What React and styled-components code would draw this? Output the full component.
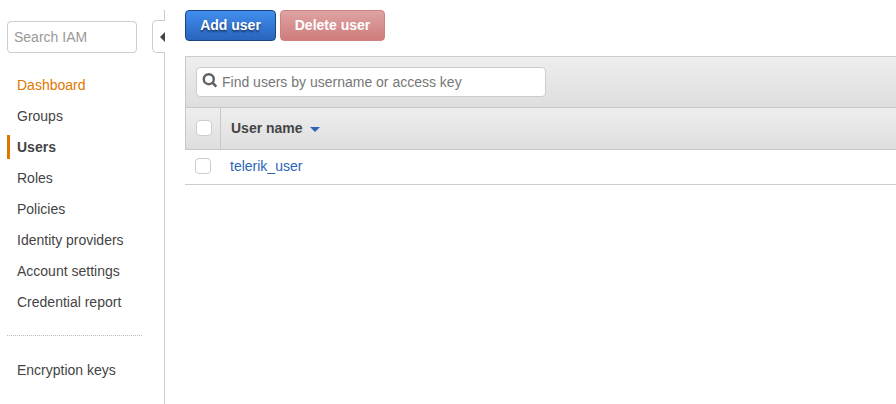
import React from "react";
import styled, { createGlobalStyle, css } from "styled-components";

const GlobalStyle = createGlobalStyle`
  *, *::before, *::after { box-sizing: border-box; }
  body {
    margin: 0;
    background: #fff;
    color: #444;
    font: 14px/24px "Liberation Sans", Arial, sans-serif;
    overflow: hidden;
  }
`;

const Page = styled.div`
  display: grid;
  grid-template-columns: 152px 13px minmax(0, 1fr);
  height: 404px;
`;

const Sidebar = styled.aside`
  padding: 21px 10px 0 7px;
`;

const field = css`
  display: block;
  border: 1px solid #ccc;
  border-radius: 4px;
  background: #fff;
  font: 14px/20px "Liberation Sans", Arial, sans-serif;
  outline: none;
`;

const SidebarSearch = styled.input`
  ${field}
  width: 130px;
  height: 32px;
  padding: 0 6px;
  &::placeholder { color: #999; opacity: 1; }
`;

const NavList = styled.nav`
  display: flex;
  flex-direction: column;
  gap: 7px;
  margin-top: 20px;
`;

const NavItem = styled.a`
  height: 24px;
  padding-left: 7px;
  border-left: 3px solid ${(p) => (p.$active ? "#d97900" : "transparent")};
  color: ${(p) => (p.$highlight ? "#e07700" : "#444")};
  font-weight: ${(p) => (p.$active ? 700 : 400)};
  white-space: nowrap;
`;

const Divider = styled.hr`
  width: 135px;
  margin: 21px 0 22px;
  border: 0;
  border-top: 1px dotted #bbb;
`;

const Rail = styled.div`
  display: flex;
  flex-direction: column;
  align-items: flex-end;
  padding-top: 10px;
`;

const RailLine = styled.div`
  width: 1px;
  background: #ccc;
  ${(p) => (p.$grow ? "flex: 1;" : "height: 10px;")}
`;

const CollapseTab = styled.button`
  display: flex;
  align-items: center;
  justify-content: flex-end;
  width: 13px;
  height: 33px;
  padding: 0;
  border: 1px solid #ccc;
  border-right: 0;
  border-radius: 5px 0 0 5px;
  background: #fff;
`;

const Main = styled.main`
  padding: 10px 0 0 20px;
`;

const Actions = styled.div`
  display: flex;
  gap: 4px;
  margin-bottom: 15px;
`;

const variants = {
  primary: css`
    width: 91px;
    border-color: #1a4580;
    background: linear-gradient(#428eee, #2765bd);
    text-shadow: 0 2px 2px rgba(0, 0, 0, 0.5);
  `,
  danger: css`
    width: 105px;
    border-color: #d08080;
    background: linear-gradient(#dea3a3, #cf7c7c);
  `,
};

const Button = styled.button`
  height: 31px;
  padding: 0 0 2px;
  border: 1px solid;
  border-radius: 4px;
  color: #fff;
  font: bold 14px/20px "Liberation Sans", Arial, sans-serif;
  ${(p) => variants[p.$variant]}
`;

const Panel = styled.section`
  border-top: 1px solid #ccc;
`;

const barStyle = css`
  display: flex;
  border-left: 1px solid #c8c8c8;
  border-bottom: 1px solid #c8c8c8;
  background: linear-gradient(#eee, #dedede);
`;

const FilterBar = styled.div`
  ${barStyle}
  height: 51px;
  padding: 10px;
`;

const FilterBox = styled.label`
  ${field}
  display: flex;
  align-items: center;
  width: 350px;
  height: 30px;
  padding-left: 5px;
`;

const FilterInput = styled.input`
  flex: 1;
  min-width: 0;
  margin-left: 4px;
  padding: 0;
  border: 0;
  outline: none;
  background: none;
  font: 14px/20px "Liberation Sans", Arial, sans-serif;
  &::placeholder { color: #777; opacity: 1; }
`;

const SearchSvg = styled.svg`
  display: block;
  margin-bottom: 2px;
`;

const HeaderRow = styled.div`
  ${barStyle}
  height: 42px;
`;

const HeaderCheck = styled.div`
  display: flex;
  align-items: center;
  width: 35px;
  padding: 0 0 1px 10px;
  border-right: 1px solid #c8c8c8;
`;

const HeaderLabel = styled.div`
  display: flex;
  align-items: center;
  gap: 7px;
  padding: 0 0 1px 10px;
  font-weight: 700;
`;

const Row = styled.div`
  display: flex;
  align-items: center;
  height: 35px;
  padding: 0 0 2px 10px;
  border-bottom: 1px solid #ccc;
`;

const Checkbox = styled.input.attrs({ type: "checkbox" })`
  appearance: none;
  width: 16px;
  height: 16px;
  margin: 0;
  border: 1px solid #ccc;
  border-radius: 4px;
  background: #fff;
`;

const UserLink = styled.a`
  margin-left: 19px;
  color: #2a65b8;
`;

const SortArrow = styled.svg`
  display: block;
  margin-top: 3px;
`;

const links = [
  { label: "Dashboard", highlight: true },
  { label: "Groups" },
  { label: "Users", active: true },
  { label: "Roles" },
  { label: "Policies" },
  { label: "Identity providers" },
  { label: "Account settings" },
  { label: "Credential report" },
];

export default function App() {
  return (
    <>
      <GlobalStyle />
      <Page>
        <Sidebar>
          <SidebarSearch placeholder="Search IAM" />
          <NavList>
            {links.map((l) => (
              <NavItem key={l.label} $active={l.active} $highlight={l.highlight}>
                {l.label}
              </NavItem>
            ))}
          </NavList>
          <Divider />
          <NavItem as="div">Encryption keys</NavItem>
        </Sidebar>
        <Rail>
          <RailLine />
          <CollapseTab aria-label="Collapse sidebar">
            <svg width="5" height="10" viewBox="0 0 5 10">
              <path d="M5 0v10L0 5z" fill="#444" />
            </svg>
          </CollapseTab>
          <RailLine $grow />
        </Rail>
        <Main>
          <Actions>
            <Button $variant="primary">Add user</Button>
            <Button $variant="danger">Delete user</Button>
          </Actions>
          <Panel>
            <FilterBar>
              <FilterBox>
                <SearchSvg width="16" height="16" viewBox="0 0 16 16" fill="none" stroke="#606060">
                  <circle cx="6.8" cy="6.2" r="5" strokeWidth="2.4" />
                  <path d="M10.3 9.7l4 4" strokeWidth="2.6" />
                </SearchSvg>
                <FilterInput placeholder="Find users by username or access key" />
              </FilterBox>
            </FilterBar>
            <HeaderRow>
              <HeaderCheck>
                <Checkbox aria-label="Select all users" />
              </HeaderCheck>
              <HeaderLabel>
                User name
                <SortArrow width="10" height="5" viewBox="0 0 10 5">
                  <path d="M0 0h10L5 5z" fill="#2a65b8" />
                </SortArrow>
              </HeaderLabel>
            </HeaderRow>
            <Row>
              <Checkbox aria-label="Select telerik_user" />
              <UserLink>telerik_user</UserLink>
            </Row>
          </Panel>
        </Main>
      </Page>
    </>
  );
}
